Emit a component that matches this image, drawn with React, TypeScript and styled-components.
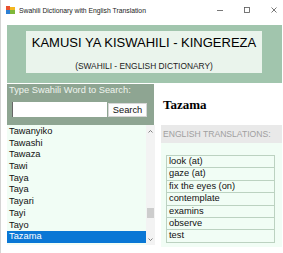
import React from 'react'
import styled, { createGlobalStyle } from 'styled-components'

const GlobalStyle = createGlobalStyle`
  html, body {
    margin: 0;
    padding: 0;
    background: #fff;
  }
  * {
    box-sizing: border-box;
  }
`

const Window = styled.div`
  width: 283px;
  height: 253px;
  display: flex;
  flex-direction: column;
  background: #fff;
  border-left: 1px solid #d4d4d4;
  font-family: 'Liberation Sans', Arial, sans-serif;
  overflow: hidden;
`

const TitleBar = styled.div`
  height: 20px;
  flex-shrink: 0;
  display: flex;
  align-items: center;
  padding-left: 5px;
`

const TitleText = styled.span`
  margin-left: 4px;
  font-size: 6.8px;
  color: #222;
`

const Controls = styled.div`
  margin-left: auto;
  margin-right: -4px;
  display: flex;
  align-items: center;
`

const ControlButton = styled.div`
  width: 27px;
  height: 20px;
  display: flex;
  align-items: center;
  justify-content: center;
`

const Main = styled.div`
  flex: 1;
  display: flex;
  flex-direction: column;
  padding: 5px 1px 0 6px;
`

const Header = styled.div`
  height: 58px;
  background: #a1c5ad;
  padding: 6px 20px 10px 19px;
`

const Banner = styled.div`
  height: 42px;
  background: #eaf4ec;
  display: flex;
  flex-direction: column;
  align-items: center;
`

const BannerTitle = styled.div`
  margin-top: 4px;
  font-size: 13px;
  line-height: 15px;
  color: #000;
`

const BannerSub = styled.div`
  margin-top: 11px;
  font-size: 8.4px;
  line-height: 10px;
  color: #222;
`

const Body = styled.div`
  margin-top: 1px;
  display: flex;
`

const LeftColumn = styled.div`
  width: 148px;
  display: flex;
  flex-direction: column;
`

const SearchPanel = styled.div`
  width: 147px;
  height: 41px;
  background: #8ea592;
  padding: 1px 0 0 2px;
`

const SearchLabel = styled.div`
  font-size: 9.3px;
  line-height: 11px;
  color: #eef4ee;
`

const SearchRow = styled.div`
  margin-top: 6px;
  margin-left: 3px;
  display: flex;
  align-items: flex-start;
`

const SearchInput = styled.div`
  width: 95px;
  height: 15px;
  background: #fff;
  border-left: 1px solid #666;
`

const SearchButton = styled.div`
  margin-left: 1px;
  margin-top: 1px;
  width: 39px;
  height: 14px;
  background: #fdfdfd;
  border: 1px solid #d6d6d6;
  font-size: 9.3px;
  line-height: 12px;
  text-align: center;
  color: #111;
`

const ListBox = styled.div`
  height: 120px;
  background: #f1fdf5;
  display: flex;
`

const ListItems = styled.div`
  width: 139px;
  padding-top: 1px;
`

const ListItem = styled.div<{ $selected?: boolean }>`
  height: 11.7px;
  line-height: 11.7px;
  font-size: 9.3px;
  padding-left: 2px;
  color: ${({ $selected }) => ($selected ? '#fff' : '#111')};
  background: ${({ $selected }) => ($selected ? '#0a77d5' : 'transparent')};
`

const ScrollBar = styled.div`
  width: 9px;
  background: #f3f3f3;
  display: flex;
  flex-direction: column;
  align-items: center;
`

const ScrollArrow = styled.div`
  height: 12px;
  display: flex;
  align-items: center;
  justify-content: center;
`

const ScrollTrack = styled.div`
  flex: 1;
  width: 100%;
  display: flex;
  flex-direction: column;
  justify-content: flex-end;
  padding-bottom: 15px;
`

const ScrollThumb = styled.div`
  height: 10px;
  margin: 0 1px;
  background: #cdcdcd;
`

const RightColumn = styled.div`
  flex: 1;
  display: flex;
  flex-direction: column;
`

const WordArea = styled.div`
  height: 41px;
  display: flex;
  align-items: center;
  padding-left: 8px;
`

const Word = styled.div`
  font-family: 'Liberation Serif', 'Times New Roman', serif;
  font-weight: bold;
  font-size: 13px;
  color: #000;
`

const Section = styled.div`
  margin-left: 6px;
  display: flex;
  flex-direction: column;
`

const Strip = styled.div`
  height: 18px;
  background: #e9e9e9;
  padding-left: 2px;
  font-size: 8.6px;
  line-height: 18px;
  color: #a0a0a0;
`

const TranslationPanel = styled.div`
  height: 104px;
  background: #f1fdf5;
  padding: 12px 7px 0 5px;
`

const Table = styled.div`
  border: 1px solid #bcd2c1;
  border-bottom: none;
`

const Row = styled.div`
  height: 12.4px;
  border-bottom: 1px solid #bcd2c1;
  padding-left: 2px;
  font-size: 9.3px;
  line-height: 11.4px;
  color: #111;
`

const words = ['Tawanyiko', 'Tawashi', 'Tawaza', 'Tawi', 'Taya', 'Taya', 'Tayari', 'Tayi', 'Tayo', 'Tazama']
const translations = ['look (at)', 'gaze (at)', 'fix the eyes (on)', 'contemplate', 'examins', 'observe', 'test']

const AppIcon = () => (
  <svg width="9" height="8" viewBox="0 0 9 8">
    <rect x="0" y="0" width="4" height="4" fill="#e8522f" />
    <rect x="4" y="1" width="5" height="3" fill="#f3b71f" />
    <rect x="0" y="4" width="4" height="4" fill="#2d7fd3" />
    <rect x="4" y="4" width="5" height="4" fill="#7fb83a" />
  </svg>
)

const App: React.FC = () => {
  return (
    <>
      <GlobalStyle />
      <Window>
        <TitleBar>
          <AppIcon />
          <TitleText>Swahili Dictionary with English Translation</TitleText>
          <Controls>
            <ControlButton>
              <svg width="6" height="6" viewBox="0 0 6 6">
                <line x1="0" y1="3.5" x2="6" y2="3.5" stroke="#555" strokeWidth="0.8" />
              </svg>
            </ControlButton>
            <ControlButton>
              <svg width="6" height="6" viewBox="0 0 6 6">
                <rect x="0.5" y="0.5" width="5" height="5" fill="none" stroke="#555" strokeWidth="0.8" />
              </svg>
            </ControlButton>
            <ControlButton>
              <svg width="6" height="6" viewBox="0 0 6 6">
                <path d="M0.5 0.5 L5.5 5.5 M5.5 0.5 L0.5 5.5" stroke="#555" strokeWidth="0.8" />
              </svg>
            </ControlButton>
          </Controls>
        </TitleBar>
        <Main>
          <Header>
            <Banner>
              <BannerTitle>KAMUSI YA KISWAHILI - KINGEREZA</BannerTitle>
              <BannerSub>(SWAHILI - ENGLISH DICTIONARY)</BannerSub>
            </Banner>
          </Header>
          <Body>
            <LeftColumn>
              <SearchPanel>
                <SearchLabel>Type Swahili Word to Search:</SearchLabel>
                <SearchRow>
                  <SearchInput />
                  <SearchButton>Search</SearchButton>
                </SearchRow>
              </SearchPanel>
              <ListBox>
                <ListItems>
                  {words.map((w, i) => (
                    <ListItem key={i} $selected={i === words.length - 1}>
                      {w}
                    </ListItem>
                  ))}
                </ListItems>
                <ScrollBar>
                  <ScrollArrow>
                    <svg width="5" height="3" viewBox="0 0 5 3">
                      <path d="M0.5 2.5 L2.5 0.5 L4.5 2.5" fill="none" stroke="#666" strokeWidth="0.8" />
                    </svg>
                  </ScrollArrow>
                  <ScrollTrack>
                    <ScrollThumb />
                  </ScrollTrack>
                  <ScrollArrow>
                    <svg width="5" height="3" viewBox="0 0 5 3">
                      <path d="M0.5 0.5 L2.5 2.5 L4.5 0.5" fill="none" stroke="#666" strokeWidth="0.8" />
                    </svg>
                  </ScrollArrow>
                </ScrollBar>
              </ListBox>
            </LeftColumn>
            <RightColumn>
              <WordArea>
                <Word>Tazama</Word>
              </WordArea>
              <Section>
                <Strip>ENGLISH TRANSLATIONS:</Strip>
                <TranslationPanel>
                  <Table>
                    {translations.map((t, i) => (
                      <Row key={i}>{t}</Row>
                    ))}
                  </Table>
                </TranslationPanel>
              </Section>
            </RightColumn>
          </Body>
        </Main>
      </Window>
    </>
  )
}

export default App
